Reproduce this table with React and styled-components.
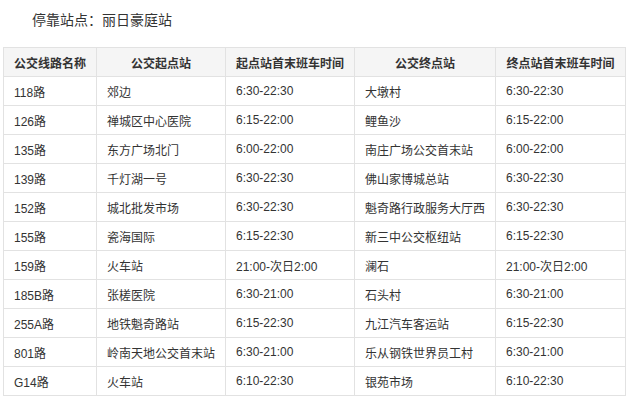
import React from "react";
import styled, { createGlobalStyle } from "styled-components";

const GlobalStyle = createGlobalStyle`
    body {
        margin: 0;
        background: #fff;
        font-family: "Liberation Sans", "Noto Sans CJK SC", sans-serif;
        color: #333;
    }
`

const Page = styled.div`
    width: 630px;
    height: 407px;
    overflow: hidden;
    padding: 0 0 0 3px;
    box-sizing: border-box;
`

const StopTitle = styled.p`
    margin: 0 0 7px 29px;
    font-size: 14px;
    line-height: 40px;
    color: #333;
`

const BusTable = styled.table`
    width: 622px;
    table-layout: fixed;
    border-collapse: collapse;
    font-size: 12px;
`

const HeadCell = styled.th`
    height: 28px;
    padding: 0;
    background: #f5f5f5;
    border: 1px solid #e2e2e2;
    font-weight: 700;
    text-align: center;
    white-space: nowrap;
    color: #333;
`

const Cell = styled.td`
    height: 28px;
    padding: 0 0 0 10px;
    border: 1px solid #e2e2e2;
    text-align: left;
    white-space: nowrap;
    color: #333;
`

const columns = [
    { title: "公交线路名称", width: 93 },
    { title: "公交起点站", width: 129 },
    { title: "起点站首末班车时间", width: 129 },
    { title: "公交终点站", width: 141 },
    { title: "终点站首末班车时间", width: 130 },
]

const routes = [
    ["118路", "郊边", "6:30-22:30", "大墩村", "6:30-22:30"],
    ["126路", "禅城区中心医院", "6:15-22:00", "鲤鱼沙", "6:15-22:00"],
    ["135路", "东方广场北门", "6:00-22:00", "南庄广场公交首末站", "6:00-22:00"],
    ["139路", "千灯湖一号", "6:30-22:30", "佛山家博城总站", "6:30-22:30"],
    ["152路", "城北批发市场", "6:30-22:30", "魁奇路行政服务大厅西", "6:30-22:30"],
    ["155路", "瓷海国际", "6:15-22:30", "新三中公交枢纽站", "6:15-22:30"],
    ["159路", "火车站", "21:00-次日2:00", "澜石", "21:00-次日2:00"],
    ["185B路", "张槎医院", "6:30-21:00", "石头村", "6:30-21:00"],
    ["255A路", "地铁魁奇路站", "6:15-22:30", "九江汽车客运站", "6:15-22:30"],
    ["801路", "岭南天地公交首末站", "6:30-21:00", "乐从钢铁世界员工村", "6:30-21:00"],
    ["G14路", "火车站", "6:10-22:30", "银苑市场", "6:10-22:30"],
]

const App = () => {
    return (
        <Page>
            <GlobalStyle />
            <StopTitle>停靠站点：丽日豪庭站</StopTitle>
            <BusTable>
                <colgroup>
                    {columns.map((col) => (
                        <col key={col.title} style={{ width: col.width }} />
                    ))}
                </colgroup>
                <thead>
                    <tr>
                        {columns.map((col) => (
                            <HeadCell key={col.title}>{col.title}</HeadCell>
                        ))}
                    </tr>
                </thead>
                <tbody>
                    {routes.map((row) => (
                        <tr key={row[0]}>
                            {row.map((text, i) => (
                                <Cell key={i}>{text}</Cell>
                            ))}
                        </tr>
                    ))}
                </tbody>
            </BusTable>
        </Page>
    )
}

export default App;
